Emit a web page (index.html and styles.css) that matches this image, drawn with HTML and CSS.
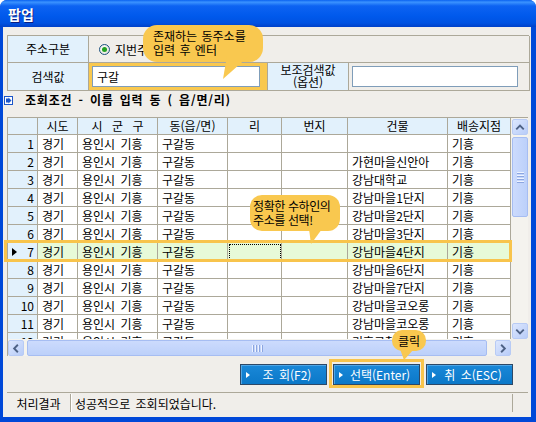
FILE: index.html
```html
<!DOCTYPE html>
<html lang="ko">
<head>
<meta charset="utf-8">
<title>팝업</title>
<link rel="stylesheet" href="styles.css">
</head>
<body>
<div class="window">
  <div class="titlebar"><span class="title">팝업</span></div>
  <div class="client">
    <div class="form">
      <div class="lbl">주소구분</div>
      <div class="radiocell"><span class="radio"><span class="dot"></span></span><span>지번주소</span></div>
      <div class="lbl">검색값</div>
      <div class="inpcell hl"><div class="input">구갈</div></div>
      <div class="lbl lbl2">보조검색값<br>(옵션)</div>
      <div class="inpcell"><div class="input input2"></div></div>
    </div>

    <div class="section"><svg class="sicon" width="9" height="9" viewBox="0 0 9 9"><rect x="0.5" y="0.5" width="8" height="8" fill="#fff" stroke="#1B55C9"/><path d="M2 2.5 H4.5 V1.5 L7.5 4.5 L4.5 7.5 V6.5 H2 Z" fill="#1B55C9"/></svg>조회조건 - 이름 입력 동 ( 읍/면/리)</div>

    <div class="grid">
      <div class="grid-main">
        <div class="viewport">
          <div class="row head">
            <div class="c rh"></div><div class="c w1">시도</div><div class="c w2 sp">시 군 구</div><div class="c w3">동(읍/면)</div><div class="c w4">리</div><div class="c w5">번지</div><div class="c w6">건물</div><div class="c w7">배송지점</div>
          </div>
          <div class="row"><div class="c rh">1</div><div class="c w1">경기</div><div class="c w2">용인시 기흥</div><div class="c w3">구갈동</div><div class="c w4"></div><div class="c w5"></div><div class="c w6"></div><div class="c w7">기흥</div></div>
          <div class="row"><div class="c rh">2</div><div class="c w1">경기</div><div class="c w2">용인시 기흥</div><div class="c w3">구갈동</div><div class="c w4"></div><div class="c w5"></div><div class="c w6">가현마을신안아</div><div class="c w7">기흥</div></div>
          <div class="row"><div class="c rh">3</div><div class="c w1">경기</div><div class="c w2">용인시 기흥</div><div class="c w3">구갈동</div><div class="c w4"></div><div class="c w5"></div><div class="c w6">강남대학교</div><div class="c w7">기흥</div></div>
          <div class="row"><div class="c rh">4</div><div class="c w1">경기</div><div class="c w2">용인시 기흥</div><div class="c w3">구갈동</div><div class="c w4"></div><div class="c w5"></div><div class="c w6">강남마을1단지</div><div class="c w7">기흥</div></div>
          <div class="row"><div class="c rh">5</div><div class="c w1">경기</div><div class="c w2">용인시 기흥</div><div class="c w3">구갈동</div><div class="c w4"></div><div class="c w5"></div><div class="c w6">강남마을2단지</div><div class="c w7">기흥</div></div>
          <div class="row"><div class="c rh">6</div><div class="c w1">경기</div><div class="c w2">용인시 기흥</div><div class="c w3">구갈동</div><div class="c w4"></div><div class="c w5"></div><div class="c w6">강남마을3단지</div><div class="c w7">기흥</div></div>
          <div class="row sel"><div class="c rh"><span class="cur"></span>7</div><div class="c w1">경기</div><div class="c w2">용인시 기흥</div><div class="c w3">구갈동</div><div class="c w4 focus"></div><div class="c w5"></div><div class="c w6">강남마을4단지</div><div class="c w7">기흥</div></div>
          <div class="row"><div class="c rh">8</div><div class="c w1">경기</div><div class="c w2">용인시 기흥</div><div class="c w3">구갈동</div><div class="c w4"></div><div class="c w5"></div><div class="c w6">강남마을6단지</div><div class="c w7">기흥</div></div>
          <div class="row"><div class="c rh">9</div><div class="c w1">경기</div><div class="c w2">용인시 기흥</div><div class="c w3">구갈동</div><div class="c w4"></div><div class="c w5"></div><div class="c w6">강남마을7단지</div><div class="c w7">기흥</div></div>
          <div class="row"><div class="c rh">10</div><div class="c w1">경기</div><div class="c w2">용인시 기흥</div><div class="c w3">구갈동</div><div class="c w4"></div><div class="c w5"></div><div class="c w6">강남마을코오롱</div><div class="c w7">기흥</div></div>
          <div class="row"><div class="c rh">11</div><div class="c w1">경기</div><div class="c w2">용인시 기흥</div><div class="c w3">구갈동</div><div class="c w4"></div><div class="c w5"></div><div class="c w6">강남마을코오롱</div><div class="c w7">기흥</div></div>
          <div class="row"><div class="c rh">12</div><div class="c w1">경기</div><div class="c w2">용인시 기흥</div><div class="c w3">구갈동</div><div class="c w4"></div><div class="c w5"></div><div class="c w6">기흥구청</div><div class="c w7">기흥</div></div>
        </div>
        <div class="vscroll">
          <div class="sbtn"><svg width="15" height="15" viewBox="0 0 15 15"><polyline points="3.5,9.5 7.5,5.5 11.5,9.5" fill="none" stroke="#4D6185" stroke-width="2"/></svg></div>
          <div class="vthumb"><span class="hgrip"></span><span class="hgrip"></span><span class="hgrip"></span><span class="hgrip"></span></div>
          <div class="vtrack"></div>
          <div class="sbtn"><svg width="15" height="15" viewBox="0 0 15 15"><polyline points="3.5,5.5 7.5,9.5 11.5,5.5" fill="none" stroke="#4D6185" stroke-width="2"/></svg></div>
        </div>
      </div>
      <div class="hscroll">
        <div class="sbtn"><svg width="15" height="15" viewBox="0 0 15 15"><polyline points="9.5,3.5 5.5,7.5 9.5,11.5" fill="none" stroke="#4D6185" stroke-width="2"/></svg></div>
        <div class="hthumb"><span class="vgrip"></span><span class="vgrip"></span><span class="vgrip"></span><span class="vgrip"></span></div>
        <div class="htrack"></div>
        <div class="sbtn"><svg width="15" height="15" viewBox="0 0 15 15"><polyline points="5.5,3.5 9.5,7.5 5.5,11.5" fill="none" stroke="#4D6185" stroke-width="2"/></svg></div>
        <div class="corner"></div>
      </div>
    </div>

    <div class="buttons">
      <div class="btn"><span class="tri"></span><span class="btxt">조 회(F2)</span></div>
      <div class="btn"><span class="tri"></span><span class="btxt">선택(Enter)</span></div>
      <div class="btn"><span class="tri"></span><span class="btxt">취 소(ESC)</span></div>
    </div>

    <div class="status">
      <div class="st-label">처리결과</div>
      <div class="st-msg">성공적으로 조회되었습니다.</div>
      <div class="st-grip"></div>
    </div>
  </div>

  <div class="hlbox hl-row"></div>
  <div class="hlbox hl-btn"></div>

  <div class="bubble b1">존재하는 동주소를<br>입력 후 엔터</div>
  <svg class="tail t1" width="34" height="26" viewBox="0 0 34 26"><polygon points="9,0 31,0 5,23" fill="#F9C84F"/></svg>

  <div class="bubble b2">정확한 수하인의<br>주소를 선택!</div>
  <svg class="tail t2" width="20" height="18" viewBox="0 0 20 18"><polygon points="2,0 15,0 4,15" fill="#F9C84F"/></svg>

  <div class="bubble b3">클릭</div>
  <svg class="tail t3" width="18" height="14" viewBox="0 0 18 14"><polygon points="2,0 16,0 6,11" fill="#F9C84F"/></svg>
</div>
</body>
</html>
```

FILE: styles.css
```css
* { box-sizing: border-box; }
html, body { margin: 0; padding: 0; background: #ffffff; }
body {
  width: 536px; height: 422px; overflow: hidden;
  font-family: "Noto Sans CJK KR", "Noto Sans", sans-serif;
  font-size: 12px; color: #000; word-spacing: 2px;
}
.window {
  position: relative; width: 536px; height: 422px;
  background: #0048D8; border-radius: 7px 7px 0 0;
  display: flex; flex-direction: column; overflow: hidden;
}
.titlebar {
  height: 27px; flex: none; display: flex; align-items: center; padding-left: 8px;
  background: linear-gradient(to bottom, #0A62F0 0%, #3B93FF 8%, #0D63F2 22%, #0059EC 60%, #0052E2 85%, #0041C9 100%);
}
.title { color: #fff; font-weight: bold; font-size: 14px; line-height: 16px; text-shadow: 1px 1px 0 #0A1E80; }
.client {
  flex: 1; margin: 0 5px 5px 3px; background: #F0EEEA;
  padding: 8px 2px 0 4px; display: flex; flex-direction: column;
}

/* form */
.form {
  display: grid; grid-template-columns: 81px 179px 81px 181px; grid-template-rows: 27px 28px;
  border-top: 1px solid #ACA899; border-left: 1px solid #ACA899;
}
.form > div { border-right: 1px solid #ACA899; border-bottom: 1px solid #ACA899; display: flex; align-items: center; }
.lbl { background: #E2F1FC; justify-content: center; text-align: center; line-height: 14px; }
.lbl2 { line-height: 12px; padding-bottom: 1px; word-spacing: 0; }
.radiocell { grid-column: 2 / 5; padding-left: 10px; }
.radio {
  width: 11px; height: 11px; border-radius: 50%; border: 1px solid #1C5180;
  background: radial-gradient(circle at 40% 40%, #fff, #DCDBD2);
  display: flex; align-items: center; justify-content: center; margin-right: 5px;
}
.dot { width: 5px; height: 5px; border-radius: 50%; background: #21A121; }
.inpcell { padding-left: 3px; }
.inpcell.hl { background: #F9C84F; }
.input {
  width: 168px; height: 21px; background: #fff; border: 1px solid #7F9DB9;
  padding-left: 4px; line-height: 19px; font-size: 12px;
}
.input2 { width: 166px; }

/* section */
.section {
  height: 16px; margin-top: 1px; margin-left: -3px;
  display: flex; align-items: center; font-weight: bold; line-height: 16px;
  letter-spacing: 0.8px; word-spacing: 2px;
}
.sicon { margin-right: 12px; flex: none; }

/* grid */
.grid {
  margin-top: 9px; width: 521px; height: 239px;
  border-left: 1px solid #ACA899; border-top: 1px solid #ACA899;
  display: flex; flex-direction: column;
}
.grid-main { display: flex; height: 221px; flex: none; }
.viewport { width: 503px; height: 221px; overflow: hidden; background: #fff; }
.row { display: flex; height: 18px; }
.row.head { height: 17px; }
.c {
  flex: none; height: 100%; border-right: 1px solid #ACA899; border-bottom: 1px solid #ACA899;
  padding-left: 4px; line-height: 17px; white-space: nowrap; overflow: hidden; background: #fff;
}
.head .c { background: #E2F1FC; text-align: center; padding-left: 0; line-height: 16px; }
.head .sp { word-spacing: 6px; }
.rh { width: 30px; background: #E2F1FC; text-align: right; padding: 0 3px 0 0; display: flex; justify-content: flex-end; align-items: center; }
.row .c.rh { background: #E2F1FC; }
.w1 { width: 40px; }
.w2 { width: 80px; }
.w3 { width: 70px; }
.w4 { width: 54px; }
.w5 { width: 66px; }
.w6 { width: 100px; }
.w7 { width: 63px; }
.sel .c { background: #E7FAD8; }
.sel .c.rh { background: #E2F1FC; justify-content: space-between; padding-left: 4px; }
.cur { width: 0; height: 0; border-left: 5px solid #000; border-top: 4.5px solid transparent; border-bottom: 4.5px solid transparent; }
.focus { outline: 1px dotted #000; outline-offset: -2px; }

.vscroll { width: 17px; height: 221px; background: #F4F3EE; display: flex; flex-direction: column; padding: 1px 0 0 1px; }
.sbtn {
  width: 16px; height: 16px; flex: none; border: 1px solid #B8CBF5; border-radius: 2px;
  background: linear-gradient(to bottom right, #DCE7FE, #B8CCF8);
  display: flex; align-items: center; justify-content: center;
}
.vthumb {
  height: 80px; flex: none; margin-top: 2px; border: 1px solid #A6BDF2; border-radius: 2px;
  background: linear-gradient(to right, #CCDBFD, #BCD0FA);
  display: flex; flex-direction: column; align-items: center; justify-content: center; gap: 1px;
}
.hgrip { width: 7px; height: 1px; background: #EEF3FF; border-bottom: 1px solid #8CA6E0; box-sizing: content-box; }
.vtrack { flex: 1; }

.hscroll { display: flex; height: 17px; flex: none; background: #F4F3EE; padding-top: 1px; }
.hthumb {
  width: 461px; margin-left: 3px; border: 1px solid #A6BDF2; border-radius: 2px;
  background: linear-gradient(to bottom, #CCDBFD, #BCD0FA);
  display: flex; align-items: center; justify-content: center; gap: 1px;
}
.vgrip { width: 1px; height: 7px; background: #EEF3FF; border-right: 1px solid #8CA6E0; box-sizing: content-box; }
.htrack { width: 8px; }
.corner { width: 17px; background: #F0EEEA; margin-top: -1px; }

/* buttons */
.buttons { margin-top: 8px; height: 21px; flex: none; display: flex; justify-content: flex-end; gap: 6px; padding-right: 16px; }
.btn {
  width: 87px; height: 21px; background: linear-gradient(to bottom, #1A88D8, #0B78C8);
  border: 1px solid #2D4866; color: #fff; display: flex; align-items: center;
  box-shadow: inset 1px 1px 0 #4FA6E6;
}
.tri { width: 0; height: 0; margin-left: 5px; border-left: 4px solid #fff; border-top: 3.5px solid transparent; border-bottom: 3.5px solid transparent; flex: none; }
.btxt { flex: 1; text-align: center; line-height: 18px; padding-right: 2px; }

/* status */
.status { margin-top: 7px; height: 21px; flex: none; display: flex; border-top: 1px solid #ACA899; width: 521px; }
.st-label { width: 64px; text-align: center; line-height: 19px; border-right: 1px solid #ACA899; box-shadow: 1px 0 0 #fff; margin: 1px 0; }
.st-msg { flex: 1; padding-left: 4px; line-height: 19px; border-right: 1px solid #ACA899; margin: 1px 0; }
.st-grip { width: 15px; }

/* overlays */
.hlbox { position: absolute; border: 3px solid #F8C44C; pointer-events: none; }
.hl-row { left: 4px; top: 240px; width: 508px; height: 22px; }
.hl-btn { left: 329px; top: 359px; width: 95px; height: 29px; }

.bubble { position: absolute; background: #F9C84F; color: #000; line-height: 14px; white-space: nowrap; word-spacing: 1px; }
.b1 { left: 143px; top: 25px; width: 120px; height: 37px; border-radius: 14px; padding: 4px 0 0 10px; }
.b2 { left: 250px; top: 195px; width: 90px; height: 36px; border-radius: 12px; padding: 4px 0 0 3px; letter-spacing: -0.4px; word-spacing: 0; }
.b3 { left: 392px; top: 330px; width: 34px; height: 21px; border-radius: 10px; text-align: center; line-height: 21px; }
.tail { position: absolute; }
.t1 { left: 218px; top: 56px; }
.t2 { left: 307px; top: 229px; }
.t3 { left: 398px; top: 349px; }
```
